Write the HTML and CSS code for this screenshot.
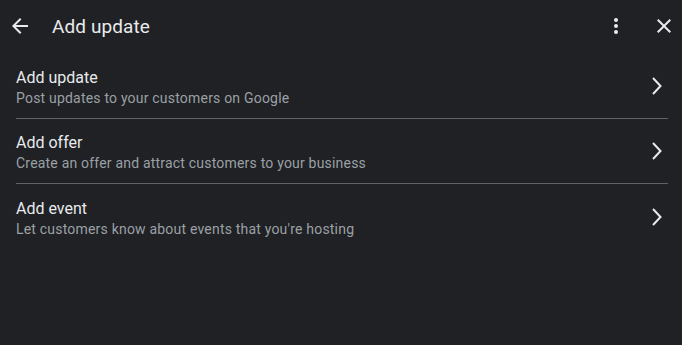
FILE: index.html
```html
<!DOCTYPE html>
<html lang="en">
<head>
  <meta charset="UTF-8">
  <title>Add update</title>
  <link rel="stylesheet" href="styles.css">
</head>
<body>
  <div class="top-bar">
    <button class="icon-btn back">
      <svg width="24" height="24" viewBox="0 0 24 24"><path d="M20 11H7.83l5.59-5.59L12 4l-8 8 8 8 1.41-1.41L7.83 13H20v-2z" fill="#e8eaed"/></svg>
    </button>
    <div class="title">Add update</div>
    <button class="icon-btn more">
      <svg width="24" height="24" viewBox="0 0 24 24"><circle cx="12" cy="6" r="2" fill="#e8eaed"/><circle cx="12" cy="12" r="2" fill="#e8eaed"/><circle cx="12" cy="18" r="2" fill="#e8eaed"/></svg>
    </button>
    <button class="icon-btn close">
      <svg width="24" height="24" viewBox="0 0 24 24"><path d="M19 6.41L17.59 5 12 10.59 6.41 5 5 6.41 10.59 12 5 17.59 6.41 19 12 13.41 17.59 19 19 17.59 13.41 12z" fill="#e8eaed"/></svg>
    </button>
  </div>

  <!-- 选项列表 -->
  <div class="option-list">
    <div class="option">
      <div class="option-text">
        <div class="option-title">Add update</div>
        <div class="option-sub">Post updates to your customers on Google</div>
      </div>
      <svg class="chevron" width="20" height="20" viewBox="0 0 20 20"><path d="M5 2l7.5 8L5 18" fill="none" stroke="#e8eaed" stroke-width="2"/></svg>
    </div>
    <div class="option">
      <div class="option-text">
        <div class="option-title">Add offer</div>
        <div class="option-sub">Create an offer and attract customers to your business</div>
      </div>
      <svg class="chevron" width="20" height="20" viewBox="0 0 20 20"><path d="M5 2l7.5 8L5 18" fill="none" stroke="#e8eaed" stroke-width="2"/></svg>
    </div>
    <div class="option">
      <div class="option-text">
        <div class="option-title">Add event</div>
        <div class="option-sub">Let customers know about events that you're hosting</div>
      </div>
      <svg class="chevron" width="20" height="20" viewBox="0 0 20 20"><path d="M5 2l7.5 8L5 18" fill="none" stroke="#e8eaed" stroke-width="2"/></svg>
    </div>
  </div>
</body>
</html>
```

FILE: styles.css
```css
* {
  margin: 0;
  padding: 0;
  box-sizing: border-box;
}

body, html {
  height: 100%;
  font-family: Roboto, 'Noto Sans', sans-serif;
  background-color: #202124;
  color: #e8eaed;
}

.top-bar {
  display: flex;
  align-items: center;
  height: 54px;
  padding: 0 6px 2px 8px;
}

.icon-btn {
  background: transparent;
  border: none;
  width: 24px;
  height: 24px;
  display: flex;
  align-items: center;
  justify-content: center;
}

.title {
  flex: 1;
  margin-left: 20px;
  font-size: 19px;
  letter-spacing: 0.1px;
  color: #e8eaed;
}

.more {
  margin-right: 24px;
}

.option-list {
  padding: 0 14px 0 16px;
}

.option {
  display: flex;
  align-items: center;
  height: 65px;
  border-bottom: 1px solid #5f6368;
}

.option:last-child {
  border-bottom: none;
}

.option-text {
  flex: 1;
  padding-top: 4px;
}

.option-title {
  font-size: 16px;
  line-height: 21px;
}

.option-sub {
  font-size: 14px;
  line-height: 21px;
  color: #9aa0a6;
  letter-spacing: 0.2px;
}

.chevron {
  margin-top: 0;
}
```
